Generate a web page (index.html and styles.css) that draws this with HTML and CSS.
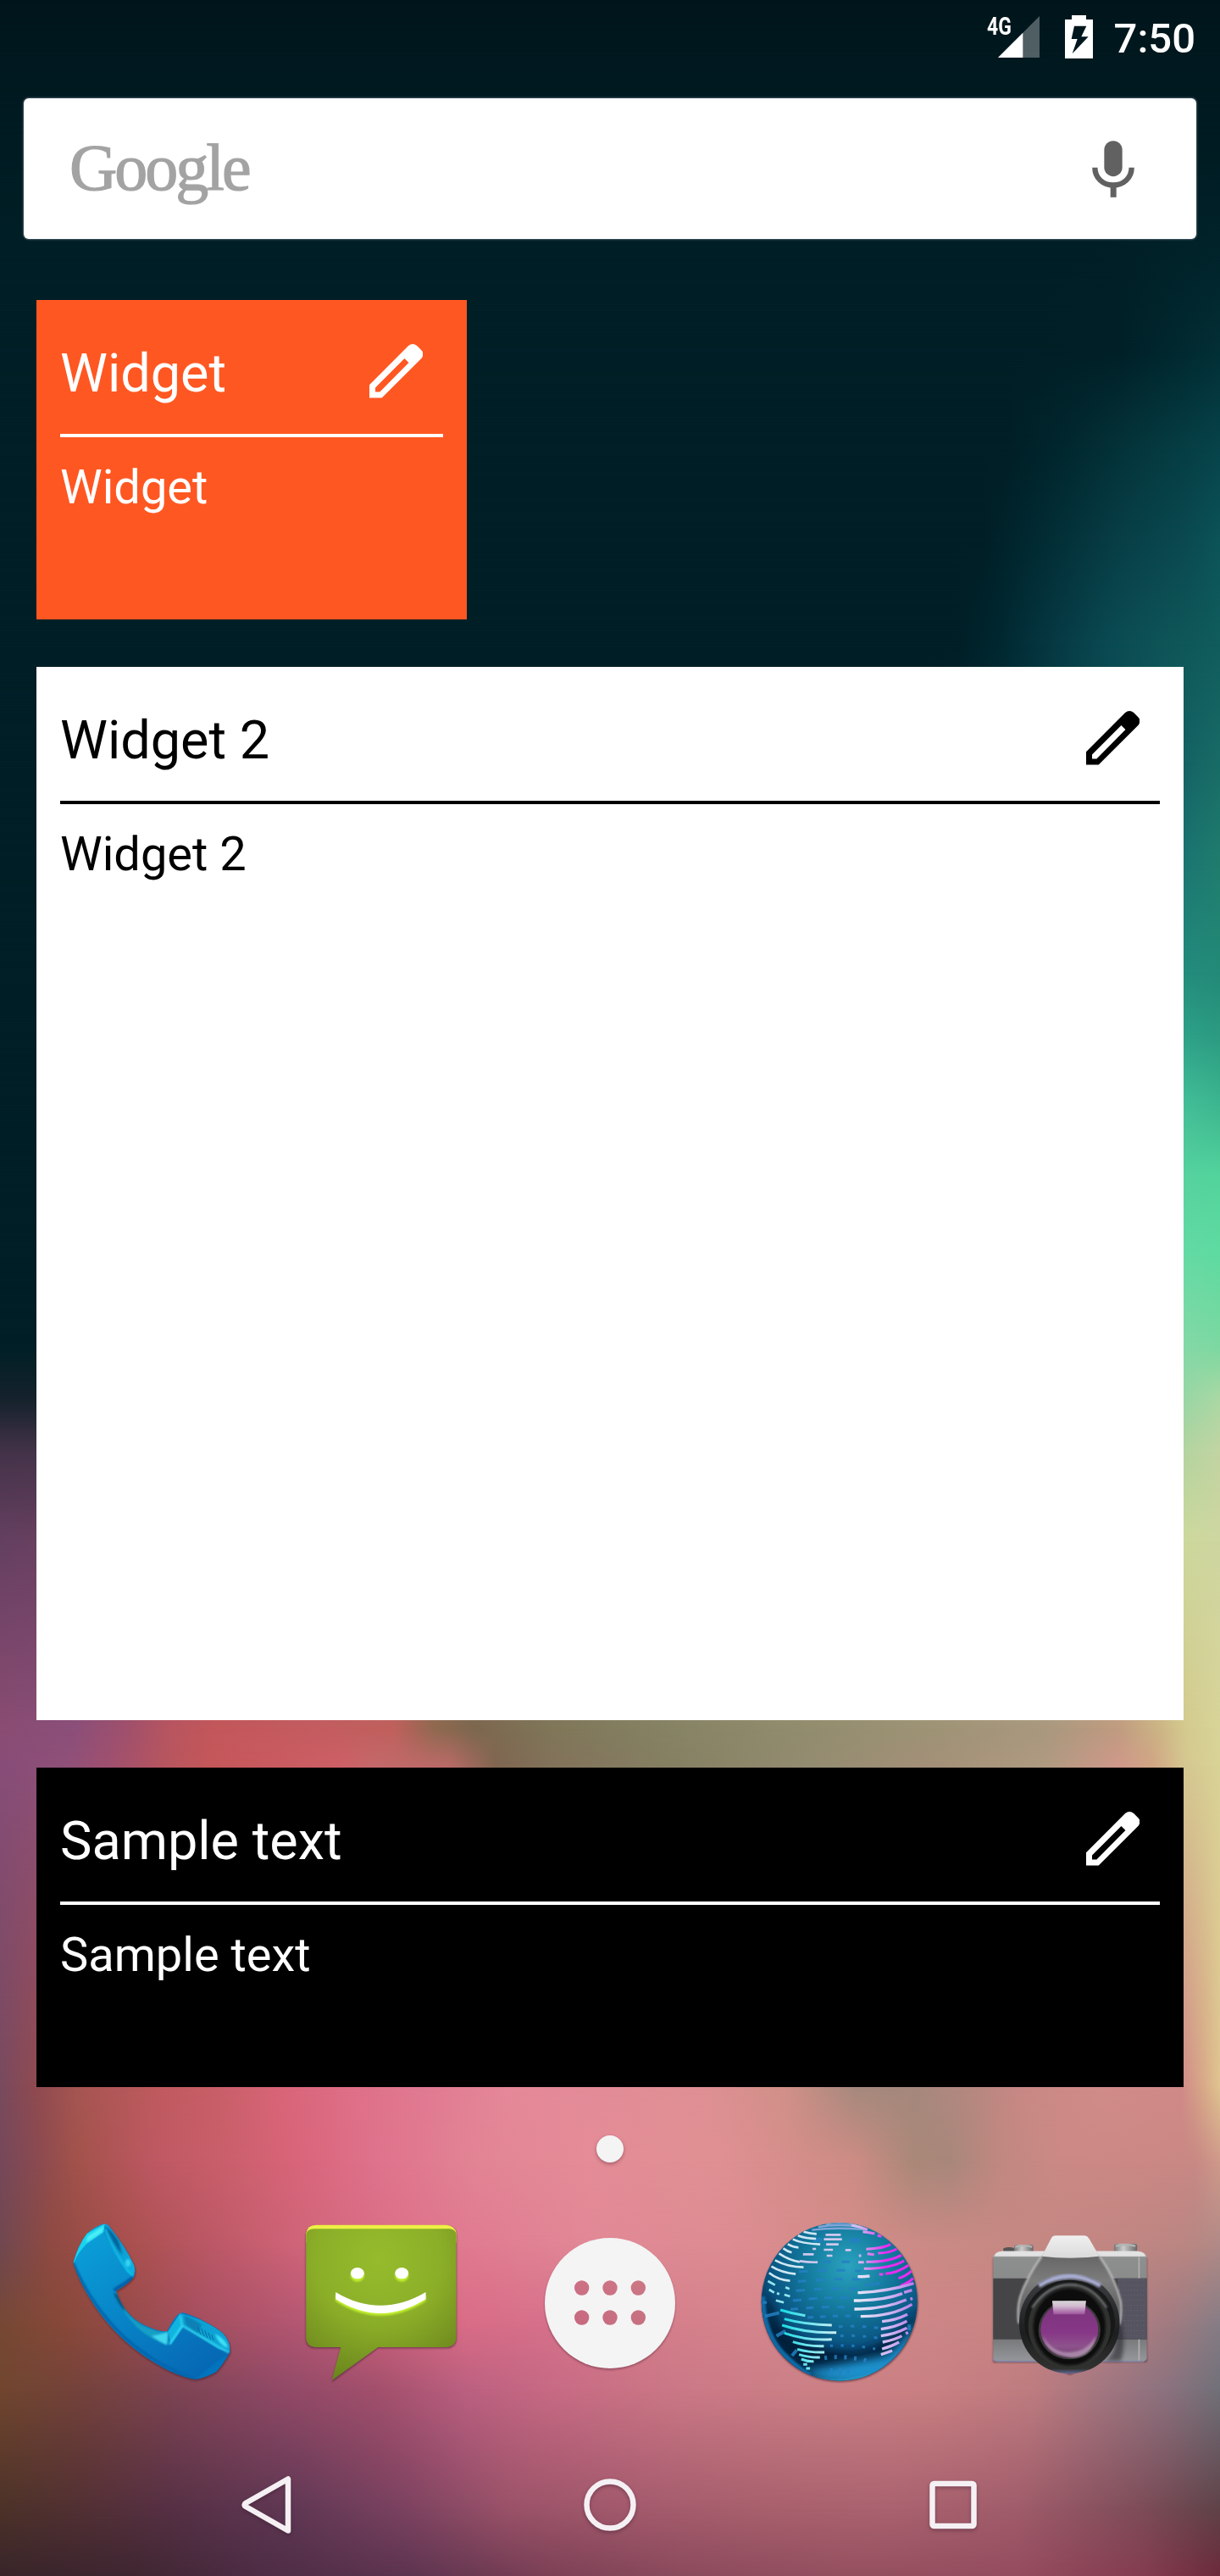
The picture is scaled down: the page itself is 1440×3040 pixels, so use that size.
FILE: index.html
```html
<!DOCTYPE html>
<html lang="en">
<head>
<meta charset="utf-8">
<title>Home screen</title>
<link rel="stylesheet" href="styles.css">
</head>
<body>
<div class="phone">
  <div class="wallpaper" aria-hidden="true">
    <i class="band b01"></i><i class="band b02"></i><i class="band b03"></i><i class="band b04"></i><i class="band b05"></i><i class="band b06"></i><i class="band b07"></i><i class="band b08"></i><i class="band b09"></i><i class="band b10"></i><i class="band b11"></i><i class="band b12"></i><i class="band b13"></i><i class="band b14"></i><i class="band b15"></i><i class="band b16"></i><i class="band b17"></i><i class="band b18"></i><i class="band b19"></i><i class="band b20"></i><i class="band b21"></i><i class="band b22"></i><i class="band b23"></i><i class="band b24"></i><i class="band b25"></i><i class="band b26"></i>
  </div>

  <div class="screen">
    <header class="status">
      <span class="network">4G</span>
      <svg class="signal" viewBox="0 0 49 49"><path d="M0 49L49 0V49z" fill="#fff" fill-opacity=".31"/><path d="M0 49L29.3 19.7V49z" fill="#fff"/></svg>
      <svg class="battery" viewBox="351 54 99 153"><path fill="#fff" fill-rule="evenodd" d="M375 54H426V69H450V207H351V69H375zM384 92L374 138H395L377 190L434 130H409L427 92z"/></svg>
      <span class="clock">7:50</span>
    </header>

    <div class="search">
      <span class="logo">Google</span>
      <svg class="mic" viewBox="447 495 150 200"><rect x="490" y="495" width="64" height="126" rx="32" fill="#616161"/><path d="M457 590C457 627 486 652 522 652S587 627 587 590" fill="none" stroke="#616161" stroke-width="19"/><path d="M512 655H533V695H512z" fill="#616161"/></svg>
    </div>

    <main class="widgets">
      <section class="widget orange">
        <div class="head"><h2>Widget</h2><svg class="pencil" viewBox="124 178 190 190"><path d="M124 368V322L262 184Q277 172 292 184L309 201Q319 213 309 227L168 368zM145 332V347H161L263 244L248 229z"/></svg></div>
        <hr>
        <p>Widget</p>
      </section>
      <section class="widget white">
        <div class="head"><h2>Widget 2</h2><svg class="pencil" viewBox="124 178 190 190"><path d="M124 368V322L262 184Q277 172 292 184L309 201Q319 213 309 227L168 368zM145 332V347H161L263 244L248 229z"/></svg></div>
        <hr>
        <p>Widget 2</p>
      </section>
      <section class="widget black">
        <div class="head"><h2>Sample text</h2><svg class="pencil" viewBox="124 178 190 190"><path d="M124 368V322L262 184Q277 172 292 184L309 201Q319 213 309 227L168 368zM145 332V347H161L263 244L248 229z"/></svg></div>
        <hr>
        <p>Sample text</p>
      </section>
    </main>

    <div class="pager"><span class="dot"></span></div>

    <div class="dock">
      <svg class="app" viewBox="37.8 30 630 630">
        <defs>
          <linearGradient id="ph1" x1="0" y1="0" x2=".7" y2="1"><stop offset="0" stop-color="#0ba6dc"/><stop offset=".5" stop-color="#0887c9"/><stop offset="1" stop-color="#0668b4"/></linearGradient>
          <linearGradient id="ph2" x1="0" y1="0" x2="1" y2="1"><stop offset="0" stop-color="#0a86bd"/><stop offset="1" stop-color="#0cb4e6"/></linearGradient>
          <filter id="b2" x="-20%" y="-20%" width="140%" height="140%"><feGaussianBlur stdDeviation="2.5"/></filter>
          <filter id="b6" x="-30%" y="-30%" width="160%" height="160%"><feGaussianBlur stdDeviation="7"/></filter>
          <filter id="b16" x="-40%" y="-60%" width="180%" height="220%"><feGaussianBlur stdDeviation="17"/></filter>
          <clipPath id="phc"><path d="M126 108Q156 82 188 73Q200 73 208 85Q262 152 292 216Q302 240 292 263Q268 290 230 310Q262 410 350 440Q385 456 412 453Q425 420 450 393Q460 385 474 389Q548 414 606 458Q638 492 633 528Q610 570 584 597Q548 618 510 624Q470 618 420 595Q250 510 150 358Q98 278 78 210Q94 150 126 108z"/></clipPath>
        </defs>
        <path transform="translate(2 5)" filter="url(#b2)" fill="#3a2028" fill-opacity=".55" d="M126 108Q156 82 188 73Q200 73 208 85Q262 152 292 216Q302 240 292 263Q268 290 230 310Q262 410 350 440Q385 456 412 453Q425 420 450 393Q460 385 474 389Q548 414 606 458Q638 492 633 528Q610 570 584 597Q548 618 510 624Q470 618 420 595Q250 510 150 358Q98 278 78 210Q94 150 126 108z"/>
        <g clip-path="url(#phc)">
          <path fill="url(#ph1)" d="M60 60H650V640H60z"/>
          <path d="M78 212Q96 150 126 108L190 73L186 102L128 142Q96 172 80 212z" fill="#19d2ee"/>
          <path d="M128 118L186 80L182 102L124 140z" fill="#4beef6" filter="url(#b2)"/>
          <path d="M190 78Q260 150 292 216Q300 240 288 258L268 244Q222 180 186 104z" fill="url(#ph2)"/>
          <path d="M196 84Q226 112 240 140L252 184Q214 136 196 84z" fill="#06659a" filter="url(#b2)"/>
          <path d="M190 92Q222 170 270 236Q282 252 292 262" fill="none" stroke="#13bfe8" stroke-width="6" filter="url(#b2)"/>
          <ellipse cx="272" cy="212" rx="9" ry="13" fill="#36d4f2" filter="url(#b2)"/>
          <path d="M292 262Q262 286 222 308" fill="none" stroke="#045ca8" stroke-width="12" filter="url(#b2)"/>
          <path d="M222 318Q270 420 356 446Q390 460 414 454L412 500Q350 484 300 436Q242 374 222 318z" fill="#149fc5" filter="url(#b2)"/>
          <path d="M228 318Q258 350 260 384Q238 356 222 322z" fill="#07517c" filter="url(#b2)"/>
          <path d="M356 470Q384 466 414 456L410 502Q386 492 356 470z" fill="#3fd6ee" filter="url(#b2)"/>
          <path d="M414 454L456 390L470 434L424 502z" fill="#11b3df"/>
          <path d="M456 390Q548 412 610 462Q638 495 632 528L590 516L464 434z" fill="#0da2d3"/>
          <path d="M472 398Q500 408 532 430L520 462L476 430z" fill="#0780b5" filter="url(#b2)"/>
          <path d="M520 440l10 26M532 444l10 28M544 450l9 27M556 458l9 24M568 466l7 19" stroke="#08699b" stroke-width="3"/>
          <path d="M580 462Q624 486 626 512Q594 504 580 462z" fill="#40e2f8" filter="url(#b2)"/>
          <path d="M458 398L464 434L630 530M464 434L418 500" fill="none" stroke="#35d9f2" stroke-width="6" filter="url(#b2)"/>
          <path d="M630 530L580 566L510 624L588 604z" fill="#0574bd" filter="url(#b2)"/>
          <path d="M78 212Q142 365 260 476Q380 580 508 622" fill="none" stroke="#0565ad" stroke-width="10" filter="url(#b2)"/>
        </g>
      </svg>

      <svg class="app" viewBox="11.4 30 630 630">
        <defs>
          <radialGradient id="ms1" cx=".48" cy=".2" r=".85"><stop offset="0" stop-color="#95bc2c"/><stop offset=".5" stop-color="#8bae28"/><stop offset="1" stop-color="#69831c"/></radialGradient>
        </defs>
        <path transform="translate(0 4)" filter="url(#b2)" fill="#402030" fill-opacity=".6" d="M98 77H560Q596 80 596 114V478Q594 508 562 510H318L154 630L186 510H94Q64 508 62 478V112Q66 78 98 77z"/>
        <path fill="#eef045" d="M98 77H560Q590 80 595 106V140H63V106Q68 78 98 77z"/>
        <path fill="url(#ms1)" d="M90 91H570Q590 92 595 108V478Q594 506 562 510H318L154 628L186 510H94Q64 506 63 478V108Q70 92 90 91z"/>
        <g fill="#c2f02e" filter="url(#b2)"><ellipse cx="245" cy="257" rx="24" ry="21"/><ellipse cx="402" cy="257" rx="24" ry="21"/><path d="M168 325Q326 419 487 325V347Q326 449 168 347z"/></g>
        <g fill="#fff"><ellipse cx="245" cy="248" rx="24" ry="20"/><ellipse cx="402" cy="248" rx="24" ry="20"/><path d="M168 315Q326 410 487 315V340Q326 440 168 340z"/></g>
      </svg>

      <svg class="app" viewBox="-15 330 630 630">
        <defs><mask id="holes" maskUnits="userSpaceOnUse" x="-15" y="330" width="630" height="630"><path d="M-15 330H615V960H-15z" fill="#fff"/><g fill="#000"><circle cx="200" cy="600" r="26"/><circle cx="300" cy="600" r="26"/><circle cx="400" cy="600" r="26"/><circle cx="200" cy="705" r="26"/><circle cx="300" cy="705" r="26"/><circle cx="400" cy="705" r="26"/></g></mask></defs>
        <g mask="url(#holes)"><circle cx="300" cy="659" r="231" fill="#502030" fill-opacity=".45" filter="url(#b2)"/><circle cx="300" cy="654" r="231" fill="#f4f4f4"/></g>
        <g fill="#803048" fill-opacity=".16"><circle cx="200" cy="600" r="26"/><circle cx="300" cy="600" r="26"/><circle cx="400" cy="600" r="26"/><circle cx="200" cy="705" r="26"/><circle cx="300" cy="705" r="26"/><circle cx="400" cy="705" r="26"/></g>
      </svg>

      <svg class="app" viewBox="18.6 30 630 630">
        <defs>
          <radialGradient id="gl1" cx=".55" cy=".28" r=".72"><stop offset="0" stop-color="#2ba3bf"/><stop offset=".35" stop-color="#147c9f"/><stop offset=".68" stop-color="#095482"/><stop offset="1" stop-color="#03213f"/></radialGradient>
          <linearGradient id="gl2" gradientUnits="userSpaceOnUse" x1="380" y1="0" x2="600" y2="0"><stop offset="0" stop-color="#e8eefa"/><stop offset=".6" stop-color="#d0b5f0"/><stop offset="1" stop-color="#b67bea"/></linearGradient>
          <linearGradient id="gl3" gradientUnits="userSpaceOnUse" x1="130" y1="0" x2="320" y2="0"><stop offset="0" stop-color="#18dbe4"/><stop offset="1" stop-color="#cdeff6"/></linearGradient>
          <linearGradient id="gl4" gradientUnits="userSpaceOnUse" x1="400" y1="0" x2="560" y2="0"><stop offset="0" stop-color="#cfc0ef"/><stop offset=".6" stop-color="#e92cf0"/></linearGradient>
          <clipPath id="glc"><ellipse cx="333" cy="349" rx="276" ry="280"/></clipPath>
        </defs>
        <ellipse cx="334" cy="353" rx="277" ry="280" fill="#301828" fill-opacity=".6" filter="url(#b2)"/>
        <g clip-path="url(#glc)">
          <path fill="url(#gl1)" d="M50 60H620V640H50z"/>
          <path d="M62 330Q100 350 110 420Q180 520 380 528Q520 510 610 380L590 490Q480 590 320 580Q170 590 90 480z" fill="#021c38" filter="url(#b16)"/>
          <path d="M200 600Q330 570 500 540Q580 470 608 410Q610 540 480 620Q340 660 200 600z" fill="#1c91cc" filter="url(#b16)"/>
          <path d="M190 610Q330 650 480 600L440 640H240z" fill="#2bc0ea" filter="url(#b6)"/>
          <path d="M62 330Q60 450 130 530Q190 590 230 610" fill="none" stroke="#0d6ba5" stroke-width="18" filter="url(#b2)"/>
          <g fill="none" stroke="#2380c3" stroke-width="9" stroke-opacity=".85">
            <path d="M273 208H400" stroke-dasharray="30 37"/><path d="M190 243Q300 234 410 240" stroke-dasharray="32 34"/><path d="M186 277Q300 266 420 270" stroke-dasharray="30 34"/><path d="M180 310Q300 300 400 303" stroke-dasharray="30 32"/><path d="M168 345Q300 330 380 336" stroke-dasharray="30 26"/><path d="M160 376Q300 362 380 370" stroke-dasharray="26 29"/><path d="M220 405Q350 396 400 400" stroke-dasharray="20 24"/><path d="M330 437Q400 432 470 442" stroke-dasharray="14 28"/><path d="M336 470Q400 466 470 478" stroke-dasharray="12 28"/><path d="M300 505Q380 500 460 516" stroke-dasharray="10 28"/><path d="M280 548Q350 538 430 558" stroke-width="15" stroke-dasharray="9 26"/><path d="M304 585V606M335 582V610M364 586V604"/><path d="M370 132H406M240 130H272" stroke-width="16"/><path d="M70 400L120 388M110 470L142 452M165 540L182 520M580 430V450" stroke-width="12"/><path d="M62 352H76M425 290L478 284"/>
          </g>
          <g fill="none" stroke="#7fa5d8" stroke-width="7"><path d="M284 74Q340 64 394 76M258 84Q330 72 410 84M236 95Q320 84 432 94"/></g>
          <g fill="none" stroke="#cfe8f4" stroke-width="8">
            <path d="M206 101Q230 108 252 109M186 115Q215 126 250 126M168 128Q200 143 265 146M150 145Q170 156 188 157M134 160Q148 170 164 175M119 178Q155 202 192 208M105 202Q150 226 206 227M92 224Q130 247 178 251M84 247Q115 272 158 275"/>
            <path d="M80 276L105 290M84 306L102 317M142 298L156 304M138 324L158 330M108 344L136 352M112 318l8 5" stroke="#94e6ee"/>
            <path d="M284 112H338M278 128H342M286 146H330M278 165H310M288 186H308M354 166H374M204 181H242M238 162H250M192 205Q225 210 256 209" stroke="#cfc8ee"/>
          </g>
          <g fill="none" stroke="url(#gl3)" stroke-width="9">
            <path d="M124 378Q165 391 212 398M138 410Q210 430 306 432M130 432Q220 462 322 458M138 460Q220 488 306 482M168 491Q220 508 278 506M184 517Q230 530 280 528M190 536Q230 548 264 546M198 552Q222 562 242 560M205 571h14M215 585h14"/>
          </g>
          <g fill="none" stroke="url(#gl4)" stroke-width="9">
            <path d="M376 78Q410 84 432 94M416 101Q440 104 458 108M468 114l14 4M492 116Q506 122 516 134M428 163Q490 160 514 146M470 177Q512 176 536 162M428 208Q510 208 552 184M420 232Q515 232 562 204M474 252h14M496 250Q540 246 580 218M542 266Q570 258 590 238M550 292Q576 284 594 266M400 209h20M402 186h8M432 179l24 3"/>
          </g>
          <g fill="none" stroke="url(#gl2)" stroke-width="10">
            <path d="M398 260Q420 261 440 258M398 317Q500 314 596 284M384 345Q490 345 556 320M562 316L590 308M386 375Q490 376 570 342M408 401Q520 401 590 358M484 419Q530 416 574 394M480 446Q530 440 572 418M480 470Q530 464 572 442M486 492Q530 484 554 470M484 516Q520 506 544 492M480 536Q500 530 520 522M584 340l8-3M568 462l8-5"/>
          </g>
        </g>
      </svg>

      <svg class="app" viewBox="22.2 30 630 630">
        <defs>
          <linearGradient id="ca1" x1="0" y1="0" x2="0" y2="1"><stop offset="0" stop-color="#e8e8e8"/><stop offset=".06" stop-color="#8d8f8e"/><stop offset=".25" stop-color="#8a8b8b"/><stop offset=".8" stop-color="#77797a"/><stop offset="1" stop-color="#96979b"/></linearGradient>
          <linearGradient id="ca2" x1="0" y1="0" x2="0" y2="1"><stop offset="0" stop-color="#f0f0f0"/><stop offset="1" stop-color="#dadada"/></linearGradient>
          <linearGradient id="ca3" x1="0" y1="0" x2="0" y2="1"><stop offset="0" stop-color="#565656"/><stop offset=".5" stop-color="#7c7c7c"/><stop offset="1" stop-color="#555"/></linearGradient>
          <linearGradient id="ca4" x1="0" y1="0" x2="0" y2="1"><stop offset="0" stop-color="#8b8d9a"/><stop offset=".1" stop-color="#3b3c40"/><stop offset=".6" stop-color="#1d1e1f"/><stop offset=".95" stop-color="#30322f"/><stop offset="1" stop-color="#666a98"/></linearGradient>
          <linearGradient id="ca5" x1="0" y1="0" x2="0" y2="1"><stop offset="0" stop-color="#7b347a"/><stop offset=".55" stop-color="#873787"/><stop offset=".8" stop-color="#8d528c"/><stop offset="1" stop-color="#714070"/></linearGradient>
          <linearGradient id="ca6" x1="0" y1="0" x2="0" y2="1"><stop offset="0" stop-color="#d8d8d8"/><stop offset=".4" stop-color="#d1b8d0"/><stop offset="1" stop-color="#9d519b"/></linearGradient>
          <linearGradient id="ca7" x1="0" y1="0" x2="1" y2="0"><stop offset="0" stop-color="#777"/><stop offset=".4" stop-color="#ccc"/><stop offset="1" stop-color="#666"/></linearGradient>
        </defs>
        <path d="M68 190H612V558H440L340 604L240 560H68z" fill="#302028" fill-opacity=".6" filter="url(#b2)" transform="translate(0 4)"/>
        <path d="M104 160Q124 152 144 160V184H104z" fill="#555"/><rect x="142" y="147" width="68" height="34" rx="8" fill="url(#ca7)"/><rect x="496" y="143" width="82" height="36" rx="10" fill="url(#ca7)"/>
        <path d="M146 155Q176 146 206 155M502 152Q538 143 572 152" fill="none" stroke="#b4b4b4" stroke-width="7"/>
        <path d="M68 190Q74 172 100 170H580Q606 172 612 190V548Q610 558 600 560H78Q68 558 68 548z" fill="url(#ca1)"/>
        <path d="M72 188Q78 170 100 170H580Q602 172 608 188z" fill="#e2e2e2"/>
        <path d="M68 266H612V482H68z" fill="#454548"/><path d="M510 266H612V482H510z" fill="#555460"/>
        <path d="M510 272H612M510 290H612M510 308H612M510 326H612M510 344H612M510 362H612M510 380H612M510 398H612M510 416H612M510 434H612M510 452H612M510 470H612" stroke="#777686" stroke-opacity=".35" stroke-width="4" stroke-dasharray="5 8 3 6"/>
        <path d="M582 190h5v76h-5zM582 482h5v76h-5z" fill="#b0b0b0"/>
        <path d="M68 552Q74 560 84 560H240M450 560H602" fill="none" stroke="#8388a8" stroke-width="5"/>
        <path d="M500 450Q510 540 460 558H520Q540 500 520 420z" fill="#24242c" fill-opacity=".6" filter="url(#b6)"/>
        <path d="M240 188L280 120H398L444 188Q504 272 520 350Q524 400 516 430H156Q152 370 164 330Q184 268 240 188z" fill="url(#ca3)"/>
        <path d="M240 188Q184 268 164 330Q152 370 158 425M444 188Q504 272 520 350Q524 400 514 430" fill="none" stroke="#c2c2c2" stroke-width="6" filter="url(#b2)"/>
        <path d="M240 188L274 124Q278 115 290 115H392Q402 116 408 126L444 188Q340 200 240 188z" fill="url(#ca2)"/>
        <ellipse cx="338" cy="426" rx="178" ry="178" fill="url(#ca4)"/>
        <path d="M230 292Q338 226 448 292" fill="none" stroke="#a8acd0" stroke-width="15" filter="url(#b2)"/>
        <ellipse cx="339" cy="420" rx="160" ry="148" fill="#171818"/>
        <ellipse cx="338" cy="436" rx="146" ry="148" fill="#303230"/>
        <path d="M206 370Q260 290 338 288T470 370" fill="none" stroke="#707274" stroke-width="7" filter="url(#b2)"/>
        <ellipse cx="338" cy="438" rx="128" ry="136" fill="#0c0d0c" filter="url(#b2)"/>
        <ellipse cx="338" cy="449" rx="110" ry="104" fill="#393b39"/>
        <ellipse cx="338" cy="448" rx="102" ry="98" fill="url(#ca5)"/>
        <path d="M244 468Q260 536 338 545T432 468Q402 526 338 528T244 468z" fill="#b59bb5" fill-opacity=".75" filter="url(#b2)"/>
        <path d="M277 346H397L392 394H282z" fill="url(#ca6)"/>
      </svg>
    </div>

    <nav class="nav">
      <svg viewBox="0 0 90 90"><path d="M70 14.500V75.500L20 47Q17 45 20 43z"/></svg>
      <svg viewBox="0 0 90 90"><circle cx="45" cy="45" r="27.500"/></svg>
      <svg viewBox="0 0 90 90"><rect x="20.500" y="20" width="49" height="50" rx="2"/></svg>
    </nav>
  </div>
</div>
</body>
</html>
```
FILE: styles.css
```css
* { box-sizing: border-box; }
body { margin: 0; font-family: Roboto, "Liberation Sans", sans-serif; }
svg { display: block; flex: none; }

.phone { display: grid; width: 1440px; height: 3040px; overflow: hidden; background: #00161c; }
.wallpaper, .screen { grid-area: 1 / 1; }
.wallpaper { display: grid; height: 3040px; isolation: isolate; }

/* Each band fades in over --fade, starting at --top, above the one before it. */
.band {
  grid-area: 1 / 1;
  margin-top: var(--top);
  -webkit-mask-image: linear-gradient(transparent, #000 var(--fade));
  mask-image: linear-gradient(transparent, #000 var(--fade));
}
.b01 { --top: 0px; --fade: 180px; background: #001c23; }
.b02 { --top: 180px; --fade: 120px; background: linear-gradient(90deg, #001f26 1300px, #00242a 1440px); }
.b03 { --top: 300px; --fade: 115px; background: linear-gradient(90deg, #001f26 1240px, #002027 1320px, #022f36 1440px); }
.b04 { --top: 415px; --fade: 115px; background: linear-gradient(90deg, #001f26 1190px, #01282f 1260px, #04363c 1340px, #06444a 1440px); }
.b05 { --top: 530px; --fade: 110px; background: linear-gradient(90deg, #001f26 1160px, #022c34 1230px, #083e46 1320px, #0a4a50 1400px, #0c5458 1440px); }
.b06 { --top: 640px; --fade: 120px; background: linear-gradient(90deg, #001f26 1130px, #002831 1180px, #063842 1240px, #0a4a52 1310px, #0e5457 1370px, #105c5c 1440px); }
.b07 { --top: 760px; --fade: 140px; background: linear-gradient(90deg, #001f26 1100px, #146264 1397px, #186c66 1440px); }
.b08 { --top: 900px; --fade: 110px; background: linear-gradient(90deg, #001f26 1100px, #1a7472 1397px, #1f7c6c 1440px); }
.b09 { --top: 1010px; --fade: 140px; background: linear-gradient(90deg, #001f26 1100px, #248c7c 1397px, #238a78 1440px); }
.b10 { --top: 1150px; --fade: 70px; background: linear-gradient(90deg, #001f26 1100px, #2da088 1397px, #2b9a80 1440px); }
.b11 { --top: 1220px; --fade: 80px; background: linear-gradient(90deg, #001f26 1100px, #42bd97 1397px, #3bb58e 1440px); }
.b12 { --top: 1300px; --fade: 90px; background: linear-gradient(90deg, #001f26 1100px, #56d29f 1397px, #53d49c 1440px); }
.b13 { --top: 1390px; --fade: 90px; background: linear-gradient(90deg, #001f26 300px, #64daa4 1397px, #5edba0 1440px); }
.b14 { --top: 1480px; --fade: 110px; background: linear-gradient(90deg, #001f26 100px, #84d8a6 1397px, #7cd8a0 1440px); }
.b15 { --top: 1590px; --fade: 60px; background: linear-gradient(90deg, #15222c 0, #15222c 43px, #98d6a5 1397px, #aad8a4 1440px); }
.b16 { --top: 1650px; --fade: 64px; background: linear-gradient(90deg, #443349 0, #443349 43px, #b4d49f 1397px, #c2d4a2 1440px); }
.b17 { --top: 1714px; --fade: 104px; background: linear-gradient(90deg, #644060 0, #684060 43px, #ccd89c 1397px, #ced6a0 1440px); }
.b18 { --top: 1818px; --fade: 222px; background: linear-gradient(90deg, #8a4c72 0, #8b4f7a 86px, #a0506c 150px, #b85560 200px, #c4575a 257px, #c45c60 370px, #c0605c 465px, #90694f 512px, #7c674e 560px, #7f7658 650px, #858263 780px, #8f8b6c 920px, #9e9375 1100px, #aa987e 1240px, #c09b80 1320px, #cdb585 1370px, #d4ca8e 1400px, #d8d498 1440px); }
.b19 { --top: 2040px; --fade: 42px; background: linear-gradient(90deg, #874d78 0, #8f5078 80px, #a0506f 130px, #b8565e 200px, #c4575a 250px, #cd5f66 400px, #c4686a 440px, #b86a66 530px, #806650 585px, #82725a 650px, #857f62 780px, #938c70 950px, #a39078 1100px, #ae9a80 1230px, #cf988a 1320px, #d0a585 1360px, #d5c890 1400px, #d9d396 1440px); }
.b20 { --top: 2082px; --fade: 381px; background: linear-gradient(90deg, #784a5e 0, #8f4a50 43px, #a55552 90px, #be5a5e 180px, #c95f68 260px, #d86578 330px, #df7088 420px, #e07a92 500px, #e58898 600px, #e38c98 700px, #df9093 830px, #d09088 930px, #a6897c 1010px, #a5887c 1080px, #b98880 1160px, #c88884 1200px, #d08c88 1300px, #d08a88 1395px, #d8a888 1420px, #dfc490 1440px); }
.b21 { --top: 2463px; --fade: 87px; background: linear-gradient(90deg, #75485a 0, #8a4a50 43px, #a2524a 90px, #bd5862 180px, #c95f6a 260px, #d86579 350px, #df738d 450px, #e28494 560px, #e48c97 700px, #df9092 850px, #cc8c84 1010px, #a98878 1080px, #a8877b 1120px, #c08880 1180px, #cb8985 1250px, #cb8884 1350px, #c88884 1410px, #cf9a8a 1440px); }
.b22 { --top: 2550px; --fade: 100px; background: linear-gradient(90deg, #704850 0, #8f4a42 60px, #a8504e 150px, #bb5866 250px, #cf6478 350px, #da6e86 450px, #e07a90 550px, #e18896 700px, #dd8c92 850px, #d38c88 1000px, #cb8a85 1100px, #c58883 1200px, #c28682 1300px, #ba8682 1400px, #b08a86 1440px); }
.b23 { --top: 2650px; --fade: 95px; background: linear-gradient(90deg, #764834 0, #864838 70px, #954a48 150px, #a34e5e 230px, #b25672 350px, #c9607c 450px, #d86c86 550px, #d5708a 650px, #d47c8a 750px, #d4858c 900px, #cf8688 1050px, #c88482 1200px, #b88084 1300px, #a07a80 1380px, #857c85 1440px); }
.b24 { --top: 2745px; --fade: 75px; background: linear-gradient(90deg, #70462f 0, #74423c 100px, #7c4452 200px, #904966 330px, #a3506c 450px, #bb6080 550px, #c76a84 650px, #cb7886 800px, #cb8086 950px, #c98082 1100px, #bd7c80 1220px, #a27680 1300px, #8a727e 1380px, #707078 1440px); }
.b25 { --top: 2820px; --fade: 140px; background: linear-gradient(90deg, #4c3228 0, #523034 100px, #563044 200px, #603854 350px, #7c4260 480px, #9a5268 600px, #a35a6c 750px, #a8606c 900px, #aa626f 1050px, #a05c6a 1200px, #7c4c58 1350px, #5f4248 1440px); }
.b26 { --top: 2960px; --fade: 80px; background: linear-gradient(90deg, #38252a 0, #3e2630 150px, #4c2c44 300px, #5c3450 480px, #7c4055 650px, #8a4a5c 800px, #94505f 1000px, #944c5e 1200px, #843c50 1350px, #6c2a3c 1440px); }

.screen { display: flex; flex-direction: column; height: 3040px; z-index: 1; }

.status { display: flex; justify-content: flex-end; height: 116px; padding: 18px 29px 0 0; color: #fff; flex: none; }
.network { width: 30px; margin-right: -17px; font-size: 29px; font-weight: 700; line-height: 26px; transform: scaleX(.79); transform-origin: 0 0; }
.signal { width: 49px; height: 49px; margin: 1px 30px 0 0; }
.battery { width: 33px; height: 51px; margin-right: 25px; }
.clock { font-size: 49px; font-weight: 500; line-height: 56px; }

.search { display: flex; align-items: center; justify-content: space-between; flex: none; width: 1384px; height: 166px; margin-left: 28px; padding: 0 73px 0 54px; border-radius: 6px; background: #fff; box-shadow: 0 0 2px 1px rgba(140, 150, 165, .5); }
.logo { padding-bottom: 3px; color: #a3a3a3; font: 78px/100px "Liberation Serif", serif; letter-spacing: -3px; -webkit-text-stroke: 1.2px #a3a3a3; }
.mic { width: 50px; height: 67px; }

.widgets { display: flex; flex-direction: column; gap: 56px; padding: 72px 43px 0; flex: none; }
.widget { display: flex; flex-direction: column; padding: 28px; height: 377px; }
.orange { width: 508px; background: #ff5722; color: #fff; }
.white { height: 1243px; background: #fff; color: #000; }
.black { background: #000; color: #fff; }
.head { display: flex; align-items: center; justify-content: space-between; height: 112px; padding-right: 24px; }
.head h2 { margin: 0; padding-top: 6px; font-size: 63px; font-weight: 400; line-height: 76px; }
.pencil { width: 63.500px; height: 63.500px; fill: currentColor; fill-rule: evenodd; }
.widget hr { flex: none; width: 100%; height: 4px; margin: 18px 0 26px; border: 0; color: inherit; background: currentColor; }
.widget p { margin: 0; font-size: 56px; line-height: 66px; }

.pager { display: flex; align-items: center; justify-content: center; height: 147px; padding-bottom: 1px; flex: none; }
.dot { width: 32px; height: 32px; border-radius: 50%; background: #f4f4f4; box-shadow: 0 2px 4px rgba(80, 30, 50, .4); }

.dock { display: grid; grid-template-columns: repeat(5, 1fr); justify-items: center; flex: none; padding: 0 42px; }
.app { width: 210px; height: 210px; }

.nav { display: flex; justify-content: center; gap: 315px; margin-top: 91px; flex: none; }
.nav svg { width: 90px; height: 90px; fill: none; stroke: #f5f0f3; stroke-width: 6.500; stroke-linejoin: round; filter: drop-shadow(0 2px 2px rgba(50, 20, 40, .4)); }
```
